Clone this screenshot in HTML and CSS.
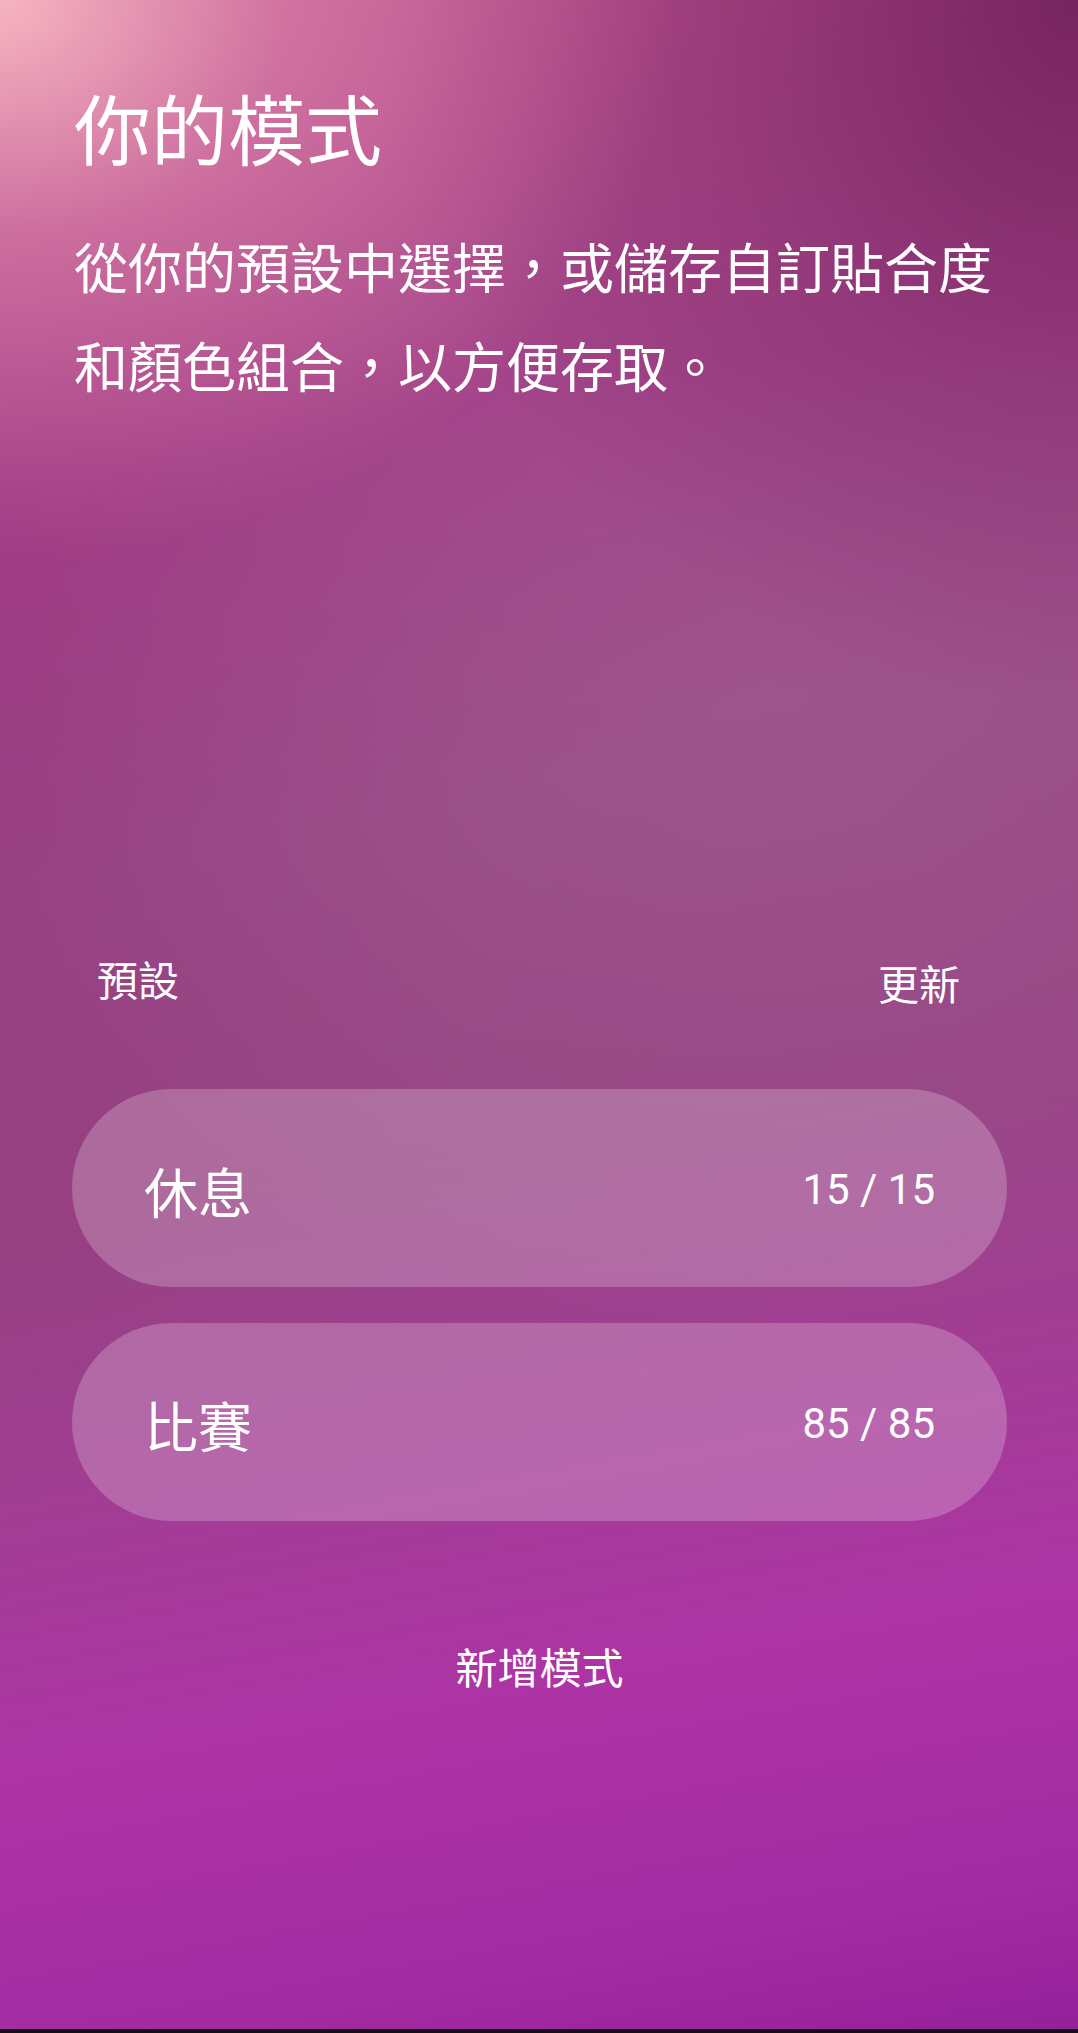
FILE: index.html
```html
<!DOCTYPE html>
<html lang="zh-Hant">
<head>
<meta charset="utf-8">
<title>你的模式</title>
<link rel="stylesheet" href="styles.css">
</head>
<body>
<div class="screen">
  <main class="content">
    <h1 class="title">你的模式</h1>
    <p class="desc">從你的預設中選擇，或儲存自訂貼合度和顏色組合，以方便存取。</p>
    <div class="section-head">
      <span class="section-label">預設</span>
      <span class="section-action">更新</span>
    </div>
    <ul class="mode-list">
      <li class="mode-card">
        <span class="mode-name">休息</span>
        <span class="mode-value">15 / 15</span>
      </li>
      <li class="mode-card">
        <span class="mode-name">比賽</span>
        <span class="mode-value">85 / 85</span>
      </li>
    </ul>
    <div class="add-mode">新增模式</div>
  </main>
  <div class="nav-strip"></div>
</div>
</body>
</html>
```

FILE: styles.css
```css
html, body {
  margin: 0;
  padding: 0;
}

body {
  width: 1078px;
  height: 2033px;
  overflow: hidden;
  font-family: "Noto Sans CJK TC", "Noto Sans", sans-serif;
  color: #ffffff;
}

.screen {
  width: 1078px;
  height: 2033px;
  display: flex;
  flex-direction: column;
  background:
    radial-gradient(ellipse 680px 560px at 0px 0px, rgba(250, 185, 195, 0.95) 0%, rgba(235, 150, 180, 0.5) 42%, rgba(200, 100, 150, 0) 100%),
    radial-gradient(ellipse 700px 700px at 1078px 0px, rgba(100, 25, 80, 0.75) 0%, rgba(110, 30, 90, 0.3) 55%, rgba(110, 30, 90, 0) 100%),
    radial-gradient(ellipse 800px 650px at 760px 700px, rgba(165, 105, 150, 0.35) 0%, rgba(165, 105, 150, 0) 100%),
    radial-gradient(ellipse 500px 700px at 0px 800px, rgba(150, 40, 120, 0.3) 0%, rgba(150, 40, 120, 0) 100%),
    linear-gradient(170deg, #b8508c 0%, #a33e88 22%, #984a86 40%, #964483 55%, #a13d93 68%, #ad34a5 80%, #a42ca3 92%, #94209a 100%);
}

.content {
  flex: 1;
  display: flex;
  flex-direction: column;
  padding: 0 71px 0 72px;
}

.title {
  margin: 88px 0 0 2px;
  font-size: 77px;
  line-height: 78px;
  font-weight: 400;
}

.desc {
  margin: 50px 0 0 2px;
  font-size: 54px;
  line-height: 99px;
  font-weight: 400;
}

.section-head {
  margin-top: 543px;
  display: flex;
  justify-content: space-between;
  padding: 0 47px 0 25px;
  font-size: 41px;
  line-height: 42px;
}

.section-action {
  padding-top: 4px;
}

.mode-list {
  list-style: none;
  margin: 86px 0 0;
  padding: 0;
  display: flex;
  flex-direction: column;
  gap: 36px;
}

.mode-card {
  height: 198px;
  border-radius: 99px;
  background: rgba(255, 255, 255, 0.22);
  display: flex;
  align-items: center;
  justify-content: space-between;
  padding: 0 72px;
}

.mode-name {
  font-size: 54px;
  line-height: 60px;
  padding-top: 6px;
}

.mode-value {
  font-family: Roboto, "Noto Sans", sans-serif;
  font-size: 42px;
  line-height: 50px;
  padding-top: 4px;
}

.add-mode {
  margin-top: 124px;
  text-align: center;
  font-size: 42px;
  line-height: 42px;
}

.nav-strip {
  height: 4px;
  background: #141014;
}
```
